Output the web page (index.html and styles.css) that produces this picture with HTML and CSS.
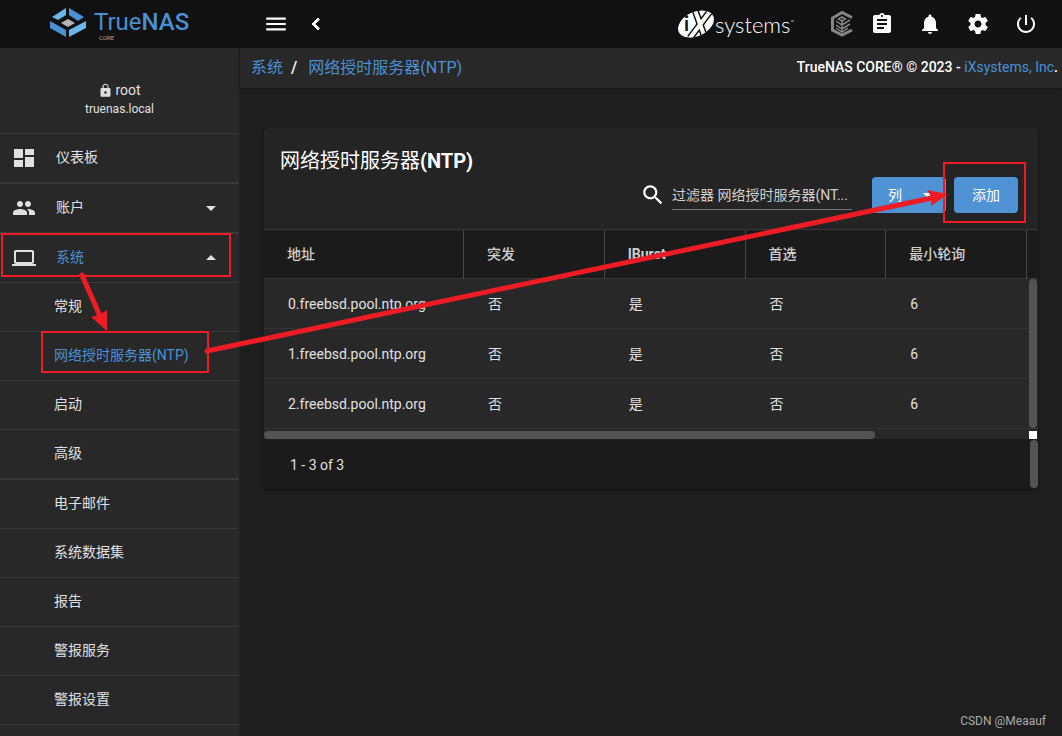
FILE: index.html
```html
<!DOCTYPE html>
<html lang="zh-CN">
<head>
<meta charset="utf-8">
<title>TrueNAS - 网络授时服务器(NTP)</title>
<link rel="stylesheet" href="styles.css">
</head>
<body>
<div class="app">
  <header class="topbar">
    <a class="brand" href="#" aria-label="TrueNAS CORE">
      <svg width="142" height="40" viewBox="0 0 142 40">
        <path d="M3 13 L17 4 V11 L9 16 Z" fill="#6bb7ea"/>
        <path d="M20 4 L35 13 L29 17 L20 11 Z" fill="#4a90d4"/>
        <path d="M1 17 L17 26 V33 L1 24 Z" fill="#4a90d4"/>
        <path d="M20 26 L37 17 V24 L20 33 Z" fill="#6bb7ea"/>
        <path d="M12 19 L19 15 L26 19 L19 23 Z" fill="#b5b5b5"/>
        <text class="brand-name" x="45" y="26">True<tspan class="brand-strong">NAS</tspan></text>
        <text class="brand-sub" x="50" y="36">CORE</text>
      </svg>
    </a>
    <div class="top-left">
      <button class="icon-btn" aria-label="菜单"><svg width="26" height="26" viewBox="0 0 24 24"><path d="M3 18h18v-2H3v2zm0-5h18v-2H3v2zm0-7v2h18V6H3z"/></svg></button>
      <button class="icon-btn" aria-label="返回"><svg class="bold" width="24" height="24" viewBox="0 0 24 24"><path d="M15.410 7.410L14 6l-6 6 6 6 1.410-1.410L10.830 12z"/></svg></button>
    </div>
    <a class="ix" href="#" aria-label="iXsystems">
      <svg width="118" height="36" viewBox="0 0 118 36">
        <defs><clipPath id="oval"><ellipse cx="18" cy="18" rx="19" ry="12" transform="rotate(-25 18 18)"/></clipPath></defs>
        <g clip-path="url(#oval)">
          <rect width="40" height="36" fill="#fff"/>
          <path d="M17 4L27 32M33 4L12 32" stroke="#111" stroke-width="7"/>
          <path d="M17 4L27 32M33 4L12 32" stroke="#fff" stroke-width="4"/>
        </g>
        <text class="ix-i" x="6" y="25">i</text>
        <text class="ix-name" x="37" y="27">systems</text>
        <path d="M113 15h3" stroke="#bbb"/>
      </svg>
    </a>
    <div class="top-right">
      <button class="icon-btn narrow" aria-label="TrueCommand">
        <svg width="24" height="26" viewBox="0 0 24 26">
          <path class="ring" d="M22 6.500 L12 1.500 L2.500 7 V19 L12 24 L22 19"/>
          <path class="dim" d="M12 5 L17 8 L12 11 L7 8 Z"/>
          <path class="stem" d="M12 9V22M6 10L12 14L20 9M6 14L12 18L20 13M6 17L12 21L18 17"/>
          <path class="vein" d="M10 8h4"/>
        </svg>
      </button>
      <button class="icon-btn wide" aria-label="任务"><svg width="24" height="24" viewBox="0 0 24 24"><path d="M19 3h-4.180C14.400 1.840 13.300 1 12 1s-2.400.840-2.820 2H5c-1.100 0-2 .9-2 2v14c0 1.100.9 2 2 2h14c1.100 0 2-.9 2-2V5c0-1.100-.9-2-2-2zm-7 0c.550 0 1 .450 1 1s-.450 1-1 1-1-.450-1-1 .450-1 1-1zm2 14H7v-2h7v2zm3-4H7v-2h10v2zm0-4H7V7h10v2z"/></svg></button>
      <button class="icon-btn wide" aria-label="通知"><svg width="24" height="24" viewBox="0 0 24 24"><path d="M12 22c1.100 0 2-.9 2-2h-4c0 1.100.890 2 2 2zm6-6v-5c0-3.070-1.640-5.640-4.500-6.320V4c0-.830-.670-1.500-1.500-1.500s-1.500.670-1.500 1.500v.680C7.630 5.360 6 7.920 6 11v5l-2 2v1h16v-1l-2-2z"/></svg></button>
      <button class="icon-btn wide" aria-label="设置"><svg width="24" height="24" viewBox="0 0 24 24"><path d="M19.430 12.980c.040-.320.070-.640.070-.980s-.030-.660-.070-.980l2.110-1.650c.190-.150.240-.420.120-.640l-2-3.460c-.120-.220-.390-.3-.610-.220l-2.490 1c-.520-.4-1.080-.730-1.690-.980l-.380-2.650C14.460 2.180 14.250 2 14 2h-4c-.250 0-.460.180-.490.420l-.380 2.650c-.610.250-1.170.590-1.690.980l-2.490-1c-.230-.090-.490 0-.610.220l-2 3.460c-.130.220-.070.490.120.640l2.110 1.650c-.040.320-.070.650-.070.980s.030.660.070.980l-2.110 1.650c-.190.150-.240.420-.120.640l2 3.460c.120.220.390.3.610.220l2.490-1c.520.4 1.080.730 1.690.980l.380 2.650c.030.240.240.420.490.420h4c.250 0 .460-.180.490-.420l.380-2.650c.610-.250 1.170-.590 1.690-.980l2.490 1c.230.090.490 0 .610-.220l2-3.460c.120-.220.070-.490-.120-.640l-2.110-1.650zM12 15.500c-1.930 0-3.500-1.570-3.500-3.500s1.570-3.500 3.500-3.500 3.500 1.570 3.500 3.500-1.570 3.500-3.500 3.500z"/></svg></button>
      <button class="icon-btn wide" aria-label="电源"><svg width="24" height="24" viewBox="0 0 24 24"><path d="M13 3h-2v10h2V3zm4.830 2.170l-1.420 1.420C17.990 7.860 19 9.810 19 12c0 3.870-3.130 7-7 7s-7-3.130-7-7c0-2.190 1.010-4.140 2.580-5.420L6.170 5.170C4.230 6.820 3 9.260 3 12c0 4.970 4.030 9 9 9s9-4.030 9-9c0-2.740-1.230-5.180-3.170-6.830z"/></svg></button>
    </div>
  </header>

  <aside class="sidebar">
    <div class="user">
      <div class="user-name"><svg width="15" height="15" viewBox="0 0 24 24"><path d="M18 8h-1V6c0-2.760-2.240-5-5-5S7 3.240 7 6v2H6c-1.100 0-2 .9-2 2v10c0 1.100.9 2 2 2h12c1.100 0 2-.9 2-2V10c0-1.100-.9-2-2-2zm-6 9c-1.100 0-2-.9-2-2s.9-2 2-2 2 .9 2 2-.9 2-2 2zM9 8V6c0-1.710 1.390-3.100 3.100-3.100s3.100 1.390 3.100 3.100v2z"/></svg>root</div>
      <div class="user-host">truenas.local</div>
    </div>
    <nav>
      <a class="item thick" href="#"><svg width="24" height="24" viewBox="0 0 24 24"><path d="M2 12h9V3H2v9zm0 9h9v-7H2v7zm11 0h9V11h-9v10zm0-18v6h9V3h-9z"/></svg><span>仪表板</span></a>
      <a class="item thick" href="#"><svg width="24" height="24" viewBox="0 0 24 24"><path d="M16 11c1.660 0 2.990-1.340 2.990-3S17.660 5 16 5s-3 1.340-3 3 1.340 3 3 3zm-8 0c1.660 0 2.990-1.340 2.990-3S9.660 5 8 5 5 6.340 5 8s1.340 3 3 3zm0 2c-2.330 0-7 1.170-7 3.500V19h14v-2.500c0-2.330-4.670-3.500-7-3.500zm8 0c-.290 0-.620.020-.970.050 1.160.840 1.970 1.970 1.970 3.450V19h6v-2.500c0-2.330-4.670-3.500-7-3.500z"/></svg><span>账户</span><svg class="caret" width="24" height="24" viewBox="0 0 24 24"><path d="M7 10l5 5 5-5z"/></svg></a>
      <a class="item active" href="#"><svg width="24" height="24" viewBox="0 0 24 24"><path d="M20 18c1.100 0 2-.9 2-2V6c0-1.100-.9-2-2-2H4c-1.100 0-2 .9-2 2v10c0 1.100.9 2 2 2H0v2h24v-2h-4zM4 6h16v10H4V6z"/></svg><span>系统</span><svg class="caret" width="24" height="24" viewBox="0 0 24 24"><path d="M7 14l5-5 5 5z"/></svg></a>
      <a class="sub" href="#">常规</a>
      <a class="sub active" href="#">网络授时服务器(NTP)</a>
      <a class="sub" href="#">启动</a>
      <a class="sub thick" href="#">高级</a>
      <a class="sub" href="#">电子邮件</a>
      <a class="sub" href="#">系统数据集</a>
      <a class="sub" href="#">报告</a>
      <a class="sub" href="#">警报服务</a>
      <a class="sub" href="#">警报设置</a>
    </nav>
  </aside>

  <main class="main">
    <div class="crumbs">
      <nav class="trail"><a href="#">系统</a><span>/</span><a href="#">网络授时服务器(NTP)</a></nav>
      <div class="copyright">TrueNAS CORE® © 2023 - <a href="#">iXsystems, Inc</a>.</div>
    </div>
    <section class="card">
      <div class="card-head">
        <h1>网络授时服务器<b>(NTP)</b></h1>
        <div class="tools">
          <label class="search">
            <svg width="26" height="26" viewBox="0 0 24 24"><path d="M15.500 14h-.790l-.280-.270C15.410 12.590 16 11.110 16 9.500 16 5.910 13.090 3 9.500 3S3 5.910 3 9.500 5.910 16 9.500 16c1.610 0 3.090-.590 4.230-1.570l.270.280v.790l5 4.990L20.490 19l-4.990-5zm-6 0C7.010 14 5 11.990 5 9.500S7.010 5 9.500 5 14 7.010 14 9.500 11.990 14 9.500 14z"/></svg>
            <input type="text" placeholder="过滤器 网络授时服务器(NT..." aria-label="过滤器">
          </label>
          <button class="btn cols">列<svg width="24" height="24" viewBox="0 0 24 24"><path d="M7 10l5 5 5-5z"/></svg></button>
          <button class="btn add">添加</button>
        </div>
      </div>
      <div class="table-wrap">
        <table>
          <colgroup><col class="c-addr"><col><col><col><col><col class="c-end"></colgroup>
          <thead><tr><th>地址</th><th>突发</th><th class="latin">IBurst</th><th>首选</th><th>最小轮询</th><th></th></tr></thead>
          <tbody>
            <tr><td>0.freebsd.pool.ntp.org</td><td>否</td><td>是</td><td>否</td><td>6</td><td></td></tr>
            <tr><td>1.freebsd.pool.ntp.org</td><td>否</td><td>是</td><td>否</td><td>6</td><td></td></tr>
            <tr><td>2.freebsd.pool.ntp.org</td><td>否</td><td>是</td><td>否</td><td>6</td><td></td></tr>
          </tbody>
        </table>
        <div class="vthumb"></div>
      </div>
      <div class="hscroll"><div class="hthumb"></div><div class="corner"></div></div>
      <div class="card-foot"><span>1 - 3 of 3</span><div class="foot-thumb"></div></div>
    </section>
  </main>
</div>

<svg class="marks" width="1062" height="736" viewBox="0 0 1062 736" aria-hidden="true">
  <g class="mark-line">
    <rect x="2" y="234" width="228" height="42"/>
    <rect x="42" y="332" width="166" height="40"/>
    <rect x="944" y="163" width="81" height="59"/>
  </g>
  <g class="mark-arrow">
    <path d="M82 275L100 316"/>
    <path d="M207 351L932 198"/>
  </g>
  <path class="mark-head" d="M107 331L91 317L99 315L107 310Z"/>
  <path class="mark-head" d="M948 194L927 190L932 198L931 206Z"/>
</svg>
<div class="watermark">CSDN @Meaauf</div>
</body>
</html>
```

FILE: styles.css
```css
* { box-sizing: border-box; }

body {
  margin: 0;
  background: #1e1e1e;
  color: #e0e0e0;
  font: 14px/20px Roboto, "Noto Sans CJK SC", sans-serif;
  overflow: hidden;
}

a { color: #4a90d4; text-decoration: none; }
svg { fill: currentColor; flex: none; }
button { border: 0; padding: 0; font: inherit; cursor: pointer; }

.app {
  display: grid;
  grid-template: 48px 1fr / 240px 1fr;
  height: 100vh;
}

/* top bar */
.topbar {
  grid-column: 1 / 3;
  display: flex;
  align-items: center;
  padding-right: 12px;
  background: #111;
  color: #fff;
}
.brand { width: 240px; display: flex; justify-content: center; }
.brand-name { font-size: 24px; fill: #4a90d4; }
.brand-strong { font-weight: 500; }
.brand-sub { font-size: 6px; fill: #aaa; }
.top-left { display: flex; flex: 1; padding-left: 16px; }
.top-right { display: flex; align-items: center; }
.icon-btn {
  display: flex;
  align-items: center;
  justify-content: center;
  width: 40px;
  height: 40px;
  background: none;
  color: #fff;
}
.icon-btn.wide { width: 48px; }
.icon-btn.narrow { width: 32px; }
.bold { stroke: #fff; stroke-width: 1; }
.dim { fill: #858585; }
.ring { stroke: #858585; stroke-width: 3; fill: none; }
.vein { stroke: #111; stroke-width: 1; fill: none; }
.stem { stroke: #858585; stroke-width: 1.5; fill: none; }
.ix { display: flex; margin-right: 30px; }
.ix-i { font: 700 20px Lato, sans-serif; fill: #111; }
.ix-name { font: 300 22px Lato, sans-serif; fill: #fff; }

/* side navigation */
.sidebar {
  overflow: hidden;
  background: #282828;
  border-right: 1px solid #222;
}
.user {
  height: 86px;
  padding-top: 32px;
  text-align: center;
  border-bottom: 1px solid #383838;
}
.user-name { display: flex; justify-content: center; align-items: center; gap: 2px; }
.user-host { font-size: 12px; line-height: 18px; }
.item {
  display: flex;
  align-items: center;
  gap: 20px;
  height: 49px;
  padding: 0 16px 0 12px;
  border-bottom: 1px solid #383838;
  color: #e0e0e0;
}
.item span { padding-bottom: 2px; }
.item.thick { height: 50px; border-bottom-width: 2px; }
.item.active span { color: #4a90d4; }
.caret { margin-left: auto; }
.sub {
  display: flex;
  align-items: center;
  height: 49px;
  padding: 0 0 2px 54px;
  border-bottom: 1px solid #383838;
  color: #e0e0e0;
}
.sub.thick { height: 50px; border-bottom-width: 2px; }
.sub.active { color: #4a90d4; }

/* breadcrumb */
.main { min-width: 0; }
.crumbs {
  display: flex;
  align-items: center;
  justify-content: space-between;
  height: 40px;
  padding: 0 4px 0 11px;
  background: #282828;
  box-shadow: 0 1px 2px #151515;
}
.trail { display: flex; gap: 8px; font-size: 16px; }
.trail span { color: #fff; font-weight: 500; }
.trail span + a { margin-left: 3px; }
.copyright { padding-bottom: 2px; color: #fff; font-weight: 500; }
.copyright a { font-weight: 400; }

/* card */
.card {
  margin: 40px 24px;
  border-radius: 4px;
  overflow: hidden;
  background: #242424;
  box-shadow: 0 1px 2px #111;
}
.card-head { padding: 17px 20px 16px 16px; border-bottom: 1px solid #383838; }
.card-head h1 { margin: 0; font-size: 20px; font-weight: 400; line-height: 32px; color: #fff; }
.card-head b { font-weight: 700; }
.tools { display: flex; justify-content: flex-end; }
.search { display: flex; align-items: center; gap: 6px; margin-right: 20px; color: #fff; }
.search input {
  width: 180px;
  height: 30px;
  padding: 0;
  border: 0;
  border-bottom: 1px solid #777;
  background: none;
  color: #e0e0e0;
  font: inherit;
}
.search input::placeholder { color: #d0d0d0; opacity: 1; }
.btn { height: 36px; border-radius: 4px; background: #4f93d5; color: #fff; }
.cols { display: flex; align-items: center; gap: 14px; width: 74px; padding-left: 16px; }
.add { width: 64px; margin-left: 8px; }

.table-wrap { position: relative; }
table { width: 100%; table-layout: fixed; border-collapse: separate; border-spacing: 0; }
.c-addr { width: 200px; }
.c-end { width: 11px; }
th {
  height: 49px;
  padding: 0 0 0 23px;
  background: #1b1b1b;
  border-right: 1px solid #484848;
  border-bottom: 1px solid #383838;
  color: #d0d0d0;
  font-weight: 500;
  text-align: left;
}
th.latin { font-weight: 700; }
td {
  height: 50px;
  padding: 0 0 0 24px;
  background: #282828;
  border-bottom: 1px solid #323232;
}
th:last-child, td:last-child { padding: 0; border-right: 0; }
.vthumb, .foot-thumb { width: 8px; border-radius: 4px; background: #535353; }
.vthumb { position: absolute; right: 1px; top: 49px; bottom: 1px; }
.hscroll {
  display: flex;
  justify-content: space-between;
  padding: 2px 1px 0 0;
  background: #282828;
}
.hthumb { width: 79%; height: 8px; border-radius: 4px; background: #535353; }
.corner { width: 8px; height: 8px; background: #fff; }
.card-foot {
  display: flex;
  align-items: center;
  justify-content: space-between;
  height: 50px;
  padding-left: 26px;
  background: #1b1b1b;
}
.card-foot span { padding-top: 2px; }
.foot-thumb { height: 48px; }

/* annotations */
.marks { position: absolute; left: 0; top: 0; pointer-events: none; }
.mark-line { fill: none; stroke: #ed1c24; stroke-width: 2; }
.mark-arrow { fill: none; stroke: #ed1c24; stroke-width: 5; stroke-linecap: round; }
.mark-head { fill: #ed1c24; }
.watermark {
  position: absolute;
  right: 16px;
  bottom: 6px;
  font-size: 12px;
  line-height: 18px;
  color: #aaa;
}
```
